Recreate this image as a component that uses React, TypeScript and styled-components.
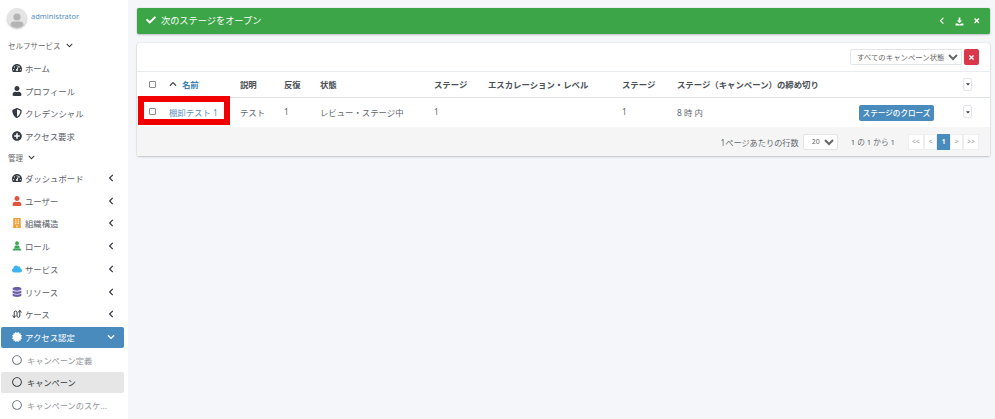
import styled, { createGlobalStyle } from "styled-components";
import type { ReactNode } from "react";
import {
  FaBuilding,
  FaCaretDown,
  FaCertificate,
  FaCheck,
  FaChevronDown,
  FaChevronLeft,
  FaChevronUp,
  FaCloud,
  FaDatabase,
  FaPlusCircle,
  FaRegCircle,
  FaShieldAlt,
  FaTachometerAlt,
  FaTimes,
  FaUser,
} from "react-icons/fa";

const GlobalStyle = createGlobalStyle`
  html, body {
    margin: 0;
    height: 100%;
    background: #f4f6f9;
    font-family: "Noto Sans", "Noto Sans CJK JP", sans-serif;
    font-size: 8.4px;
    color: #495057;
    overflow: hidden;
  }
`;

function RoleIcon() {
  return (
    <svg width="1em" height="1em" viewBox="0 0 16 16" fill="currentColor">
      <circle cx="8" cy="3.5" r="3" />
      <path d="M4 11V9.5C4 7.8 5.3 7 7 7h2c1.700 0 3 .8 3 2.500V11z" />
      <path d="M1 15c0-2 1.500-3.500 3.500-3.500h7C13.500 11.500 15 13 15 15z" />
    </svg>
  );
}

function CaseIcon() {
  return (
    <svg width="1em" height="1em" viewBox="0 0 16 16" fill="none" stroke="currentColor" strokeWidth="1.6">
      <path d="M3.500 13V5a2.300 2.300 0 0 1 4.500 0v6.500a2.300 2.300 0 0 0 4.500 0V3" />
      <path d="M1 10.500l2.500 3.500L6 10.500M10 5.500L12.500 2 15 5.500" />
    </svg>
  );
}

function TrayIcon() {
  return (
    <svg width="9" height="9" viewBox="0 0 16 16" fill="currentColor">
      <path d="M6.500 1h3v5h3L8 11 3.500 6h3z" />
      <path d="M1 11.500h3.500L8 13.500l3.500-2H15V15H1z" />
    </svg>
  );
}

type NavEntry = { label: string; icon: ReactNode; color?: string; arrow?: boolean };

const selfService: NavEntry[] = [
  { label: "ホーム", icon: <FaTachometerAlt /> },
  { label: "プロフィール", icon: <FaUser /> },
  { label: "クレデンシャル", icon: <FaShieldAlt /> },
  { label: "アクセス要求", icon: <FaPlusCircle /> },
];

const admin: NavEntry[] = [
  { label: "ダッシュボード", icon: <FaTachometerAlt />, arrow: true },
  { label: "ユーザー", icon: <FaUser />, color: "#e0533d", arrow: true },
  { label: "組織構造", icon: <FaBuilding />, color: "#f39c35", arrow: true },
  { label: "ロール", icon: <RoleIcon />, color: "#3aa655", arrow: true },
  { label: "サービス", icon: <FaCloud />, color: "#3db4ee", arrow: true },
  { label: "リソース", icon: <FaDatabase />, color: "#6a5ea8", arrow: true },
  { label: "ケース", icon: <CaseIcon />, arrow: true },
];

const headers = ["説明", "反復", "状態", "ステージ", "エスカレーション・レベル", "ステージ", "ステージ（キャンペーン）の締め切り"];

export default function App() {
  return (
    <Page>
      <GlobalStyle />
      <Sidebar>
        <UserBlock>
          <Avatar>
            <svg width="16" height="16" viewBox="0 0 16 16" fill="currentColor">
              <circle cx="8" cy="5" r="3.600" />
              <path d="M1.500 16v-3c0-2.500 1.500-3.500 3.500-3.500h6c2 0 3.500 1 3.500 3.500v3z" />
            </svg>
          </Avatar>
          <UserName>administrator</UserName>
        </UserBlock>
        <SectionTitle>
          セルフサービス <FaChevronDown />
        </SectionTitle>
        {selfService.map((item) => (
          <NavRow key={item.label} entry={item} />
        ))}
        <SectionTitle $short>
          管理 <FaChevronDown />
        </SectionTitle>
        {admin.map((item) => (
          <NavRow key={item.label} entry={item} />
        ))}
        <ActiveItem>
          <NavIcon>
            <FaCertificate />
          </NavIcon>
          <NavLabel>アクセス認定</NavLabel>
          <FaChevronDown />
        </ActiveItem>
        <SubItem>
          <FaRegCircle />
          <SubLabel>キャンペーン定義</SubLabel>
        </SubItem>
        <SubItem $current>
          <FaRegCircle />
          <SubLabel>キャンペーン</SubLabel>
        </SubItem>
        <SubItem>
          <FaRegCircle />
          <SubLabel>キャンペーンのスケ...</SubLabel>
        </SubItem>
      </Sidebar>

      <Main>
        <Banner>
          <BannerTitle>
            <FaCheck />
            次のステージをオープン
          </BannerTitle>
          <BannerTools>
            <FaChevronLeft />
            <TrayIcon />
            <FaTimes />
          </BannerTools>
        </Banner>

        <Panel>
          <Highlight />
          <Toolbar>
            <StatusSelect defaultValue="all">
              <option value="all">すべてのキャンペーン状態</option>
            </StatusSelect>
            <ClearButton>
              <FaTimes />
            </ClearButton>
          </Toolbar>

          <Table>
            <colgroup>
              <col style={{ width: 32 }} />
              <col style={{ width: 71 }} />
              <col style={{ width: 44 }} />
              <col style={{ width: 36 }} />
              <col style={{ width: 114 }} />
              <col style={{ width: 54 }} />
              <col style={{ width: 134 }} />
              <col style={{ width: 55 }} />
              <col style={{ width: 182 }} />
              <col style={{ width: 104 }} />
              <col />
            </colgroup>
            <thead>
              <tr>
                <HeadCell>
                  <Check />
                </HeadCell>
                <HeadCell>
                  <SortLink>
                    <FaChevronUp />
                    名前
                  </SortLink>
                </HeadCell>
                {headers.map((h, i) => (
                  <HeadCell key={i}>{h}</HeadCell>
                ))}
                <HeadCell />
                <HeadCell>
                  <CaretButton>
                    <FaCaretDown />
                  </CaretButton>
                </HeadCell>
              </tr>
            </thead>
            <tbody>
              <tr>
                <BodyCell>
                  <Check />
                </BodyCell>
                <BodyCell>
                  <NameLink>棚卸テスト 1</NameLink>
                </BodyCell>
                <BodyCell>テスト</BodyCell>
                <BodyCell>1</BodyCell>
                <BodyCell>レビュー・ステージ中</BodyCell>
                <BodyCell>1</BodyCell>
                <BodyCell />
                <BodyCell>1</BodyCell>
                <BodyCell>8 時 内</BodyCell>
                <BodyCell>
                  <CloseStage>ステージのクローズ</CloseStage>
                </BodyCell>
                <BodyCell>
                  <CaretButton>
                    <FaCaretDown />
                  </CaretButton>
                </BodyCell>
              </tr>
            </tbody>
          </Table>

          <Footer>
            <span>1ページあたりの行数</span>
            <PageSize defaultValue="20">
              <option value="20">20</option>
            </PageSize>
            <RangeText>1 の 1 から 1</RangeText>
            <Pager>
              <PagerItem $wide>&lt;&lt;</PagerItem>
              <PagerItem>&lt;</PagerItem>
              <PagerItem $active>1</PagerItem>
              <PagerItem>&gt;</PagerItem>
              <PagerItem $wide>&gt;&gt;</PagerItem>
            </Pager>
          </Footer>
        </Panel>
      </Main>
    </Page>
  );
}

function NavRow({ entry }: { entry: NavEntry }) {
  return (
    <NavItem>
      <NavIcon $color={entry.color}>{entry.icon}</NavIcon>
      <NavLabel>{entry.label}</NavLabel>
      {entry.arrow && <FaChevronLeft />}
    </NavItem>
  );
}

const Page = styled.div`
  display: flex;
  height: 419px;
  width: 995px;
`;

const Sidebar = styled.aside`
  width: 128px;
  flex: none;
  background: #fff;
  box-sizing: border-box;
  padding: 5px 4px 0 1px;
  overflow: hidden;
`;

const UserBlock = styled.div`
  display: flex;
  align-items: center;
  gap: 4px;
  height: 25px;
  padding-left: 6px;
  margin-bottom: 5px;
`;

const Avatar = styled.div`
  width: 20px;
  height: 20px;
  border-radius: 50%;
  background: #e4e4e4;
  box-shadow: 0 1px 2px rgba(0, 0, 0, 0.25);
  color: #b4b4b4;
  display: flex;
  align-items: flex-end;
  justify-content: center;
  overflow: hidden;
`;

const UserName = styled.span`
  color: #4f90c0;
  font-size: 7.5px;
  margin-top: -3px;
`;

const SectionTitle = styled.div<{ $short?: boolean }>`
  display: flex;
  align-items: center;
  gap: 5px;
  height: ${(p) => (p.$short ? "19.5px" : "21.5px")};
  padding-left: 7px;
  font-size: 7.5px;
  color: #666;
  white-space: nowrap;

  svg {
    font-size: 7px;
    color: #343a40;
  }
`;

const NavItem = styled.div`
  display: flex;
  align-items: center;
  height: 22.7px;
  padding: 0 9px 0 10px;
  font-size: 8.4px;
  color: #5a6067;

  > svg {
    font-size: 8px;
    color: #343a40;
  }
`;

const NavIcon = styled.span<{ $color?: string }>`
  width: 12px;
  margin-right: 1px;
  display: flex;
  justify-content: center;
  font-size: 10px;
  color: ${(p) => p.$color ?? "#343a40"};
`;

const NavLabel = styled.span`
  flex: 1;
  white-space: nowrap;
  margin-left: 1px;
`;

const ActiveItem = styled(NavItem)`
  height: 21px;
  margin: 1px 0 1.5px;
  background: #4a8bbd;
  border-radius: 2px;
  color: #fff;

  ${NavIcon} {
    color: #fff;
  }

  > svg {
    color: #fff;
  }
`;

const SubItem = styled.div<{ $current?: boolean }>`
  display: flex;
  align-items: center;
  gap: 5px;
  height: 21px;
  margin-bottom: 1.7px;
  padding-left: 11px;
  border-radius: 2px;
  font-size: 8.2px;
  color: ${(p) => (p.$current ? "#343a40" : "#93979b")};
  background: ${(p) => (p.$current ? "#e6e6e6" : "transparent")};

  > svg {
    font-size: 10px;
    flex: none;
    color: ${(p) => (p.$current ? "#343a40" : "#6c757d")};
  }
`;

const SubLabel = styled.span`
  white-space: nowrap;
`;

const Main = styled.main`
  flex: 1;
  min-width: 0;
  padding: 8px 5px 0 9px;
`;

const Banner = styled.div`
  display: flex;
  justify-content: space-between;
  align-items: center;
  height: 26px;
  box-sizing: border-box;
  padding: 0 10px 3px 9px;
  background: #3ca548;
  border-radius: 2px;
  box-shadow: 0 0 1px rgba(0, 0, 0, 0.3), 0 1px 2px rgba(0, 0, 0, 0.2);
  color: #fff;
`;

const BannerTitle = styled.div`
  display: flex;
  align-items: center;
  gap: 5px;
  font-size: 9.2px;

  svg {
    font-size: 10px;
  }
`;

const BannerTools = styled.div`
  display: flex;
  align-items: center;
  gap: 9px;
  margin-top: 3px;

  svg {
    font-size: 7.5px;
  }
`;

const Panel = styled.section`
  position: relative;
  margin-top: 9px;
  background: #fff;
  border-radius: 2px;
  box-shadow: 0 0 1px rgba(0, 0, 0, 0.25), 0 1px 2px rgba(0, 0, 0, 0.2);
`;

const Highlight = styled.div`
  position: absolute;
  left: 1px;
  top: 53px;
  width: 92px;
  height: 29px;
  box-sizing: border-box;
  border: 6px solid #f00000;
  z-index: 2;
`;

const Toolbar = styled.div`
  display: flex;
  justify-content: flex-end;
  align-items: center;
  gap: 2px;
  height: 28px;
  padding-right: 11px;
`;

const StatusSelect = styled.select`
  width: 112px;
  height: 16px;
  padding: 0 0 0 2px;
  border: 1px solid #e2e4e7;
  border-radius: 2px;
  background: #fff;
  color: #666;
  font: 7.4px "Noto Sans", "Noto Sans CJK JP", sans-serif;
`;

const ClearButton = styled.button`
  width: 15px;
  height: 16px;
  padding: 0;
  border: 0;
  border-radius: 2px;
  background: #d9384a;
  color: #fff;
  font-size: 7px;
  display: flex;
  align-items: center;
  justify-content: center;
`;

const Table = styled.table`
  width: 100%;
  table-layout: fixed;
  border-collapse: collapse;
`;

const HeadCell = styled.th`
  height: 24px;
  padding: 0 0 1px;
  border-top: 1px solid #e9ecef;
  border-bottom: 1px solid #dee2e6;
  text-align: left;
  font-size: 8.4px;
  font-weight: 700;
  color: #4a4f55;
  white-space: nowrap;

  &:first-child {
    padding-left: 12px;
  }
`;

const BodyCell = styled.td`
  height: 27px;
  padding: 0 0 2px;
  font-size: 8.4px;
  color: #62676d;
  white-space: nowrap;

  &:first-child {
    padding-left: 12px;
  }
`;

const Check = styled.span`
  display: block;
  width: 5px;
  height: 5px;
  border: 1px solid #8c8c8c;
  border-radius: 1px;
  background: #fff;
`;

const SortLink = styled.span`
  display: flex;
  align-items: center;
  gap: 5px;
  color: #3c7fb1;

  svg {
    font-size: 8px;
    color: #454a50;
  }
`;

const NameLink = styled.span`
  color: #5b8fc0;
`;

const CaretButton = styled.span`
  display: flex;
  align-items: center;
  justify-content: center;
  width: 7px;
  height: 11px;
  border: 1px solid #e4e6e8;
  border-radius: 2px;
  background: #fff;
  font-size: 6px;
  color: #343a40;
`;

const CloseStage = styled.button`
  width: 75px;
  height: 16px;
  padding: 0;
  margin-top: 2px;
  border: 0;
  border-radius: 2px;
  background: #4a8bbd;
  color: #fff;
  font: 500 7.6px "Noto Sans", "Noto Sans CJK JP", sans-serif;
  white-space: nowrap;
`;

const Footer = styled.div`
  display: flex;
  justify-content: flex-end;
  align-items: center;
  height: 29px;
  padding-right: 11px;
  background: #f5f5f5;
  font-size: 8.2px;
  color: #62676d;
`;

const PageSize = styled.select`
  width: 35px;
  height: 16px;
  margin-left: 4px;
  padding: 0 0 0 4px;
  border: 1px solid #e2e4e7;
  border-radius: 2px;
  background: #fff;
  color: #666;
  font: 7px "Noto Sans", sans-serif;
`;

const RangeText = styled.span`
  margin: 0 13px 0 13px;
  font-size: 7.7px;
`;

const Pager = styled.div`
  display: flex;
  height: 16px;
`;

const PagerItem = styled.span<{ $active?: boolean; $wide?: boolean }>`
  box-sizing: border-box;
  width: ${(p) => (p.$wide ? "16px" : "13px")};
  display: flex;
  align-items: center;
  justify-content: center;
  border: 1px solid ${(p) => (p.$active ? "#4a8bbd" : "#eceef0")};
  background: ${(p) => (p.$active ? "#4a8bbd" : "#fff")};
  color: ${(p) => (p.$active ? "#fff" : "#999")};
  font-size: 6.5px;
  font-weight: ${(p) => (p.$active ? 700 : 400)};
`;
